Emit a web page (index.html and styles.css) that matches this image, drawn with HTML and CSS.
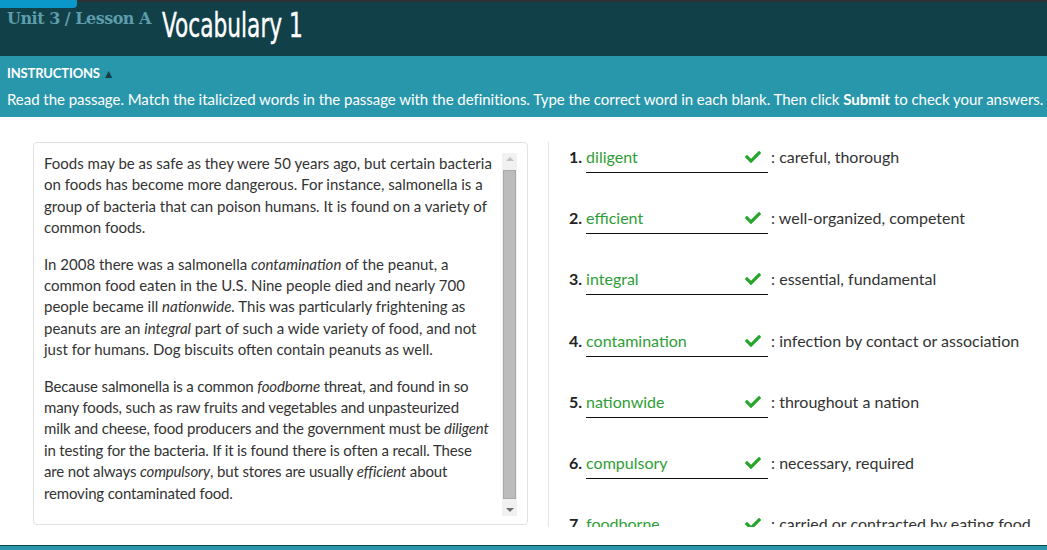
FILE: index.html
```html
<!DOCTYPE html>
<html lang="en">
<head>
<meta charset="utf-8">
<title>Unit 3 / Lesson A Vocabulary 1</title>
<link rel="stylesheet" href="styles.css">
</head>
<body>
<div class="page">
  <header class="header">
    <span class="tab"></span>
    <span class="unit">Unit 3 / Lesson A</span>
    <span class="title">Vocabulary 1</span>
  </header>
  <section class="instructions">
    <div class="instr-head">INSTRUCTIONS <span class="caret">&#9650;</span></div>
    <p class="instr-text">Read the passage. Match the italicized words in the passage with the definitions. Type the correct word in each blank. Then click <b>Submit</b> to check your answers.</p>
  </section>
  <main class="main">
    <div class="card">
      <div class="passage">
        <p>Foods may be as safe as they were 50 years ago, but certain bacteria on foods has become more dangerous. For instance, salmonella is a group of bacteria that can poison humans. It is found on a variety of common foods.</p>
        <p>In 2008 there was a salmonella <em>contamination</em> of the peanut, a common food eaten in the U.S. Nine people died and nearly 700 people became ill <em>nationwide.</em> This was particularly frightening as peanuts are an <em>integral</em> part of such a wide variety of food, and not just for humans. Dog biscuits often contain peanuts as well.</p>
        <p class="tight">Because salmonella is a common <em>foodborne</em> threat, and found in so many foods, such as raw fruits and vegetables and unpasteurized<br>milk and cheese, food producers and the government must be <em>diligent</em> in testing for the bacteria. If it is found there is often a recall. These<br>are not always <em>compulsory</em>, but stores are usually <em>efficient</em> about removing contaminated food.</p>
      </div>
      <div class="scrollbar">
        <span class="arrow up"></span>
        <span class="thumb"></span>
        <span class="arrow down"></span>
      </div>
    </div>
    <div class="answers">
      <div class="row"><span class="num">1.</span><span class="field"><span class="word">diligent</span><svg class="check" viewBox="0 0 512 512"><path d="M173.9 439.4l-166.4-166.4c-10-10-10-26.2 0-36.2l36.2-36.2c10-10 26.2-10 36.2 0L192 312.7 432.1 72.6c10-10 26.2-10 36.2 0l36.2 36.2c10 10 10 26.2 0 36.2l-294.4 294.4c-10 10-26.2 10-36.2 0z"/></svg></span><span class="def">: careful, thorough</span></div>
      <div class="row"><span class="num">2.</span><span class="field"><span class="word">efficient</span><svg class="check" viewBox="0 0 512 512"><path d="M173.9 439.4l-166.4-166.4c-10-10-10-26.2 0-36.2l36.2-36.2c10-10 26.2-10 36.2 0L192 312.7 432.1 72.6c10-10 26.2-10 36.2 0l36.2 36.2c10 10 10 26.2 0 36.2l-294.4 294.4c-10 10-26.2 10-36.2 0z"/></svg></span><span class="def">: well-organized, competent</span></div>
      <div class="row"><span class="num">3.</span><span class="field"><span class="word">integral</span><svg class="check" viewBox="0 0 512 512"><path d="M173.9 439.4l-166.4-166.4c-10-10-10-26.2 0-36.2l36.2-36.2c10-10 26.2-10 36.2 0L192 312.7 432.1 72.6c10-10 26.2-10 36.2 0l36.2 36.2c10 10 10 26.2 0 36.2l-294.4 294.4c-10 10-26.2 10-36.2 0z"/></svg></span><span class="def">: essential, fundamental</span></div>
      <div class="row"><span class="num">4.</span><span class="field"><span class="word">contamination</span><svg class="check" viewBox="0 0 512 512"><path d="M173.9 439.4l-166.4-166.4c-10-10-10-26.2 0-36.2l36.2-36.2c10-10 26.2-10 36.2 0L192 312.7 432.1 72.6c10-10 26.2-10 36.2 0l36.2 36.2c10 10 10 26.2 0 36.2l-294.4 294.4c-10 10-26.2 10-36.2 0z"/></svg></span><span class="def">: infection by contact or association</span></div>
      <div class="row"><span class="num">5.</span><span class="field"><span class="word">nationwide</span><svg class="check" viewBox="0 0 512 512"><path d="M173.9 439.4l-166.4-166.4c-10-10-10-26.2 0-36.2l36.2-36.2c10-10 26.2-10 36.2 0L192 312.7 432.1 72.6c10-10 26.2-10 36.2 0l36.2 36.2c10 10 10 26.2 0 36.2l-294.4 294.4c-10 10-26.2 10-36.2 0z"/></svg></span><span class="def">: throughout a nation</span></div>
      <div class="row"><span class="num">6.</span><span class="field"><span class="word">compulsory</span><svg class="check" viewBox="0 0 512 512"><path d="M173.9 439.4l-166.4-166.4c-10-10-10-26.2 0-36.2l36.2-36.2c10-10 26.2-10 36.2 0L192 312.7 432.1 72.6c10-10 26.2-10 36.2 0l36.2 36.2c10 10 10 26.2 0 36.2l-294.4 294.4c-10 10-26.2 10-36.2 0z"/></svg></span><span class="def">: necessary, required</span></div>
      <div class="row"><span class="num">7.</span><span class="field"><span class="word">foodborne</span><svg class="check" viewBox="0 0 512 512"><path d="M173.9 439.4l-166.4-166.4c-10-10-10-26.2 0-36.2l36.2-36.2c10-10 26.2-10 36.2 0L192 312.7 432.1 72.6c10-10 26.2-10 36.2 0l36.2 36.2c10 10 10 26.2 0 36.2l-294.4 294.4c-10 10-26.2 10-36.2 0z"/></svg></span><span class="def">: carried or contracted by eating food</span></div>
    </div>
  </main>
  <footer class="footer"></footer>
</div>
</body>
</html>
```

FILE: styles.css
```css
* { box-sizing: border-box; }
html, body { margin: 0; padding: 0; }
body {
  width: 1047px;
  height: 550px;
  overflow: hidden;
  background: #ffffff;
  font-family: Lato, "Open Sans", "Liberation Sans", sans-serif;
  color: #333333;
}
.page {
  display: flex;
  flex-direction: column;
  height: 550px;
}
.header {
  position: relative;
  height: 56px;
  background: #124049;
  border-top: 2px solid #2e3033;
  display: flex;
  align-items: flex-start;
  padding-left: 7px;
  flex: none;
}
.tab {
  position: absolute;
  left: 0;
  top: -2px;
  width: 77px;
  height: 8px;
  background: #0a97c9;
  border-bottom-right-radius: 4px;
}
.unit {
  font-family: "DejaVu Serif", serif;
  font-weight: bold;
  font-size: 16px;
  color: #5d9dab;
  margin-top: 7px;
  letter-spacing: -0.5px;
  white-space: nowrap;
}
.title {
  display: inline-block;
  font-family: "DejaVu Sans Condensed", "DejaVu Sans", sans-serif;
  font-stretch: condensed;
  font-size: 34px;
  line-height: 40px;
  color: #ffffff;
  margin-left: 11px;
  margin-top: 3px;
  transform: scaleX(0.71);
  transform-origin: left center;
  white-space: nowrap;
  -webkit-text-stroke: 0.4px #ffffff;
}
.instructions {
  height: 61px;
  background: #2997ab;
  color: #ffffff;
  padding: 9px 0 0 7px;
  flex: none;
}
.instr-head {
  font-size: 13px;
  font-weight: bold;
  letter-spacing: -0.15px;
  line-height: 16px;
}
.caret {
  color: #123f48;
  font-size: 12px;
  vertical-align: 0;
}
.instr-text {
  margin: 8px 0 0 0;
  font-size: 15px;
  line-height: 18px;
  letter-spacing: -0.035px;
  white-space: nowrap;
}
.main {
  flex: 1;
  display: flex;
  align-items: flex-start;
  padding: 25px 0 0 33px;
  min-height: 0;
}
.card {
  width: 495px;
  height: 383px;
  border: 1px solid #e2e2e2;
  border-radius: 4px;
  display: flex;
  flex: none;
}
.passage {
  flex: 1;
  padding: 10px 0 0 10px;
  font-size: 15px;
  line-height: 21.4px;
  color: #333333;
}
.passage p { margin: 0 0 15px 0; }
.passage p.tight { letter-spacing: -0.15px; }
.passage em { font-style: italic; }
.scrollbar {
  width: 15px;
  margin: 10px 10px 8px 0;
  background: #f1f1f1;
  display: flex;
  flex-direction: column;
  align-items: center;
  padding: 4px 0;
  flex: none;
}
.arrow {
  width: 0;
  height: 0;
  border-left: 4px solid transparent;
  border-right: 4px solid transparent;
  flex: none;
}
.arrow.up { border-bottom: 4px solid #c2c2c2; margin-bottom: 9px; }
.arrow.down { border-top: 4px solid #6f6f6f; margin-top: 9px; }
.thumb {
  flex: 1;
  width: 13px;
  background: #bcbcbc;
  border: 1px solid #a9a9a9;
}
.answers {
  margin-left: 20px;
  height: 385px;
  overflow: hidden;
  border-left: 1px solid #e6e6e6;
  padding: 5px 0 0 20px;
  flex: 1;
}
.row {
  display: flex;
  align-items: flex-start;
  height: 26px;
  margin-bottom: 35.2px;
  font-size: 16px;
  line-height: 20px;
  white-space: nowrap;
}
.num {
  font-weight: bold;
  color: #222222;
  margin-right: 4px;
}
.field {
  width: 182px;
  height: 26px;
  border-bottom: 1px solid #111111;
  display: flex;
  justify-content: space-between;
  align-items: flex-start;
  padding-right: 7px;
  flex: none;
}
.word { color: #2e9e36; }
.check {
  width: 16px;
  height: 16px;
  margin-top: 2px;
  fill: #26a52a;
}
.def {
  margin-left: 3px;
  color: #333333;
}
.footer {
  height: 5px;
  background: #2997ab;
  border-top: 1px solid #14434c;
  flex: none;
}
```
